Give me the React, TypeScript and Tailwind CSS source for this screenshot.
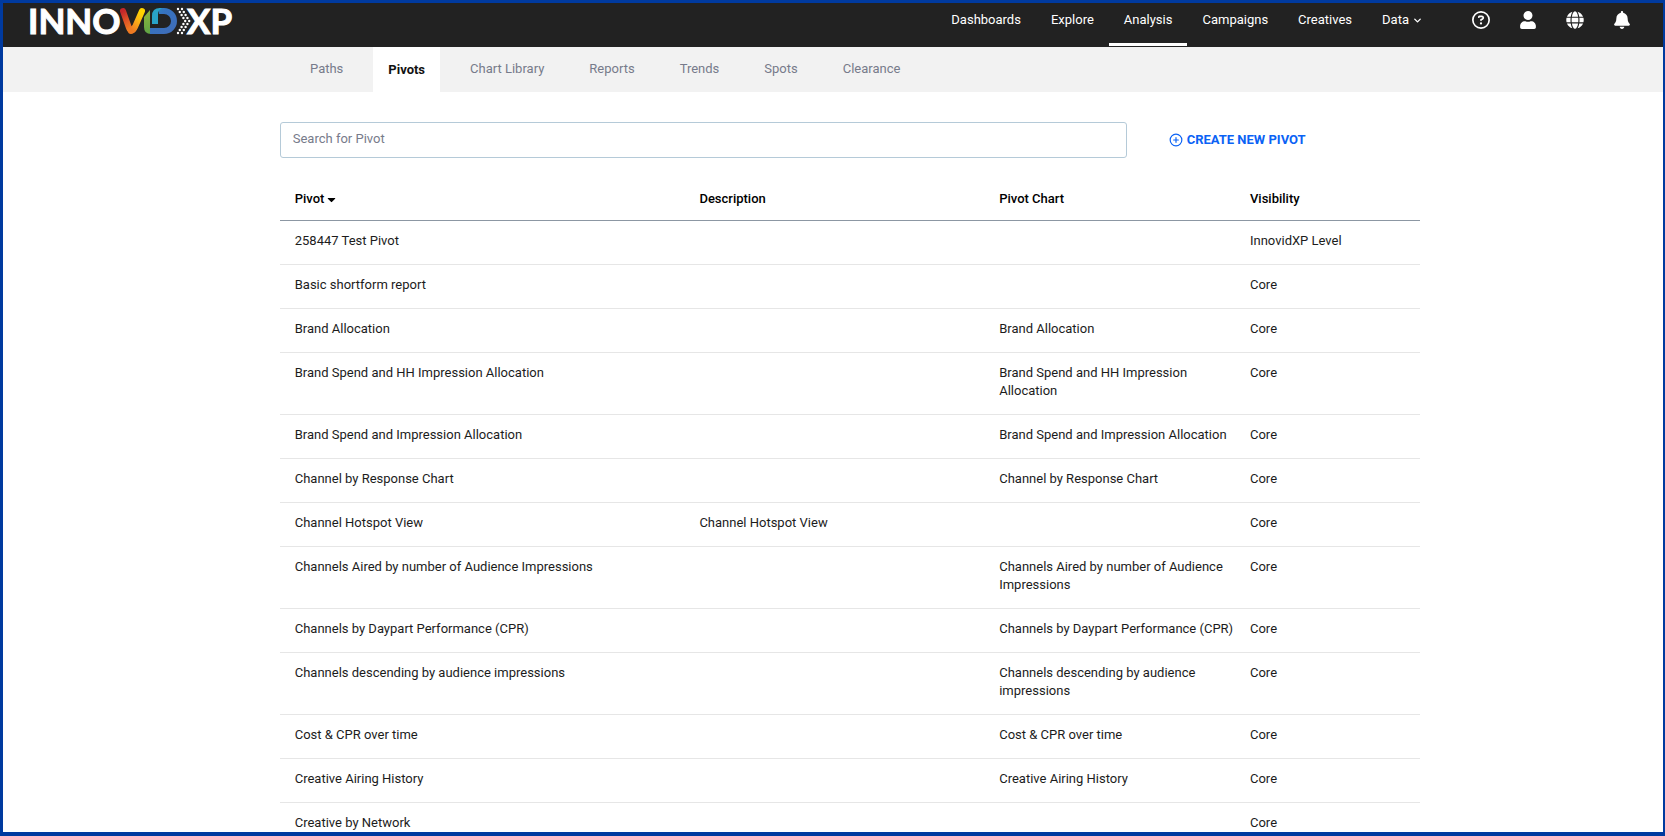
import { useState } from "react";
import { FaBell, FaCaretDown, FaGlobe, FaUser } from "react-icons/fa";
import { FaRegCircleQuestion } from "react-icons/fa6";
import { LuChevronDown, LuCirclePlus } from "react-icons/lu";

type Pivot = {
  name: string;
  description?: string;
  chart?: string;
  visibility: string;
};

const NAV_LINKS = ["Dashboards", "Explore", "Analysis", "Campaigns", "Creatives"];

const TABS = ["Paths", "Pivots", "Chart Library", "Reports", "Trends", "Spots", "Clearance"];

const PIVOTS: Pivot[] = [
  { name: "258447 Test Pivot", visibility: "InnovidXP Level" },
  { name: "Basic shortform report", visibility: "Core" },
  { name: "Brand Allocation", chart: "Brand Allocation", visibility: "Core" },
  {
    name: "Brand Spend and HH Impression Allocation",
    chart: "Brand Spend and HH Impression Allocation",
    visibility: "Core",
  },
  {
    name: "Brand Spend and Impression Allocation",
    chart: "Brand Spend and Impression Allocation",
    visibility: "Core",
  },
  { name: "Channel by Response Chart", chart: "Channel by Response Chart", visibility: "Core" },
  { name: "Channel Hotspot View", description: "Channel Hotspot View", visibility: "Core" },
  {
    name: "Channels Aired by number of Audience Impressions",
    chart: "Channels Aired by number of Audience Impressions",
    visibility: "Core",
  },
  {
    name: "Channels by Daypart Performance (CPR)",
    chart: "Channels by Daypart Performance (CPR)",
    visibility: "Core",
  },
  {
    name: "Channels descending by audience impressions",
    chart: "Channels descending by audience impressions",
    visibility: "Core",
  },
  { name: "Cost & CPR over time", chart: "Cost & CPR over time", visibility: "Core" },
  { name: "Creative Airing History", chart: "Creative Airing History", visibility: "Core" },
  { name: "Creative by Network", visibility: "Core" },
];

// dotted chevron between the ribbon and "XP"
const DOT_ROWS = [0, 1, 2, 3, 4, 5, 6, 7, 8];

function Logo() {
  return (
    <svg width="206" height="30" viewBox="0 0 206 30" className="overflow-visible" aria-label="InnovidXP">
      <defs>
        <linearGradient id="vLeft" x1="0" y1="0" x2="0.4" y2="1">
          <stop offset="0" stopColor="#c4262b" />
          <stop offset="0.4" stopColor="#d94a27" />
          <stop offset="1" stopColor="#ee7a22" />
        </linearGradient>
        <linearGradient id="vRight" x1="0.7" y1="0" x2="0.2" y2="1">
          <stop offset="0" stopColor="#ffd400" />
          <stop offset="0.4" stopColor="#fbb416" />
          <stop offset="1" stopColor="#ee7a22" />
        </linearGradient>
        <linearGradient id="leaf" x1="0" y1="0" x2="0" y2="1">
          <stop offset="0" stopColor="#8fb63c" />
          <stop offset="1" stopColor="#5fa345" />
        </linearGradient>
        <linearGradient id="bowl" x1="0" y1="0" x2="1" y2="1">
          <stop offset="0" stopColor="#2b8fc4" />
          <stop offset="0.3" stopColor="#3573c0" />
          <stop offset="1" stopColor="#3f6db8" />
        </linearGradient>
      </defs>
      <text x="-1" y="28" className="fill-white stroke-white stroke-1 font-['Lato'] text-[35px] font-bold">
        INNO
      </text>
      <path d="M115 11 L121 4 V22 Q121 28 127 28 H122 Q115 28 115 21 Z" fill="url(#leaf)" />
      <path d="M121 25 H135 A10 10 0 0 0 135 5 H130" fill="none" stroke="url(#bowl)" strokeWidth="6" />
      <path d="M123 18 V10 Q123 2 131 2 H133 Q129 4 129 9 V18 Z" fill="#29a3c8" />
      <path d="M94 5 L100 22 Q102 27 105 22" fill="none" stroke="url(#vLeft)" strokeWidth="6" strokeLinecap="round" />
      <path d="M102 25 Q104 25 106 21 L113 5" fill="none" stroke="url(#vRight)" strokeWidth="6" strokeLinecap="round" />
      {DOT_ROWS.map((row) => {
        const shift = 4 - Math.abs(4 - row);
        return [0, 1].map((col) => (
          <circle key={`${row}-${col}`} cx={149 + shift * 1.8 + col * 4} cy={3 + row * 3} r="1.2" fill="#ffffff" />
        ));
      })}
      <text x="158" y="28" className="fill-white stroke-white stroke-1 font-['Lato'] text-[35px] font-bold">
        XP
      </text>
    </svg>
  );
}

function Header() {
  return (
    <header className="flex h-11 shrink-0 items-start justify-between bg-[#222222] pl-[26px] pr-[18px] text-white">
      <a href="#" className="mt-[3px]">
        <Logo />
      </a>
      <div className="flex h-full items-start">
        <nav className="flex text-[13px] leading-[18px]">
          {NAV_LINKS.map((link) => (
            <a
              key={link}
              href="#"
              className={`h-[43px] px-[15px] pt-2 ${link === "Analysis" ? "border-b-3 border-white" : ""}`}
            >
              {link}
            </a>
          ))}
          <button className="flex h-[43px] items-start gap-[3px] pl-[15px] pr-[35px] pt-2">
            Data
            <LuChevronDown strokeWidth={3} className="mt-1 size-[11px]" />
          </button>
        </nav>
        <div className="flex gap-px pt-2">
          <button aria-label="Help" className="px-[14px]">
            <FaRegCircleQuestion className="size-[18px]" />
          </button>
          <button aria-label="Account" className="px-[14px]">
            <FaUser className="size-[18px]" />
          </button>
          <button aria-label="Language" className="px-[14px]">
            <FaGlobe className="size-[18px]" />
          </button>
          <button aria-label="Notifications" className="px-[14px]">
            <FaBell className="size-[18px]" />
          </button>
        </div>
      </div>
    </header>
  );
}

export default function App() {
  const [search, setSearch] = useState("");
  const [activeTab, setActiveTab] = useState("Pivots");

  const rows = PIVOTS.filter((pivot) => pivot.name.toLowerCase().includes(search.toLowerCase()));

  return (
    <div className="flex h-screen flex-col border-b-4 border-l-3 border-r-2 border-t-3 border-[#003a9f] bg-white font-['Roboto',sans-serif] text-[13px] leading-[18px] text-[#1c1c1c]">
      <Header />

      <nav className="flex h-[45px] shrink-0 gap-[15px] bg-[#f2f2f2] pl-[292px] text-[#777b8b]">
        {TABS.map((tab) => (
          <button
            key={tab}
            onClick={() => setActiveTab(tab)}
            className={`px-[15px] ${tab === activeTab ? "bg-white font-bold text-[#111111]" : "pb-0.5"}`}
          >
            {tab}
          </button>
        ))}
      </nav>

      <main className="min-h-0 flex-1 overflow-hidden">
        <div className="ml-[16.67%] w-[68.67%] pt-[30px]">
          <div className="flex items-center">
            <input
              type="search"
              aria-label="Search for Pivot"
              placeholder="Search for Pivot"
              value={search}
              onChange={(e) => setSearch(e.target.value)}
              className="h-9 w-[74.3%] rounded-[3px] border border-[#b5cad8] px-3 pb-1 outline-none placeholder:text-[#777b8b]"
            />
            <button className="ml-[42px] flex items-center gap-1 font-bold text-[#0a62f5]">
              <LuCirclePlus className="size-[14px]" />
              CREATE NEW PIVOT
            </button>
          </div>

          <table className="mt-5 w-full table-fixed border-separate border-spacing-0 text-left">
            <colgroup>
              <col className="w-[35.5%]" />
              <col className="w-[26.3%]" />
              <col className="w-[22%]" />
              <col />
            </colgroup>
            <thead>
              <tr className="text-black [&>th]:border-b [&>th]:border-[#8c97a3] [&>th]:px-[15px] [&>th]:py-3 [&>th]:font-medium">
                <th>
                  <button className="flex items-center gap-px">
                    Pivot
                    <FaCaretDown className="size-[13px]" />
                  </button>
                </th>
                <th>Description</th>
                <th>Pivot Chart</th>
                <th>Visibility</th>
              </tr>
            </thead>
            <tbody>
              {rows.map((pivot) => (
                <tr
                  key={pivot.name}
                  className="align-top [&>td]:border-b [&>td]:border-[#e6e6e6] [&>td]:pb-[14px] [&>td]:pl-[15px] [&>td]:pt-[11px]"
                >
                  <td>{pivot.name}</td>
                  <td>{pivot.description}</td>
                  <td>{pivot.chart}</td>
                  <td>{pivot.visibility}</td>
                </tr>
              ))}
            </tbody>
          </table>
        </div>
      </main>
    </div>
  );
}
